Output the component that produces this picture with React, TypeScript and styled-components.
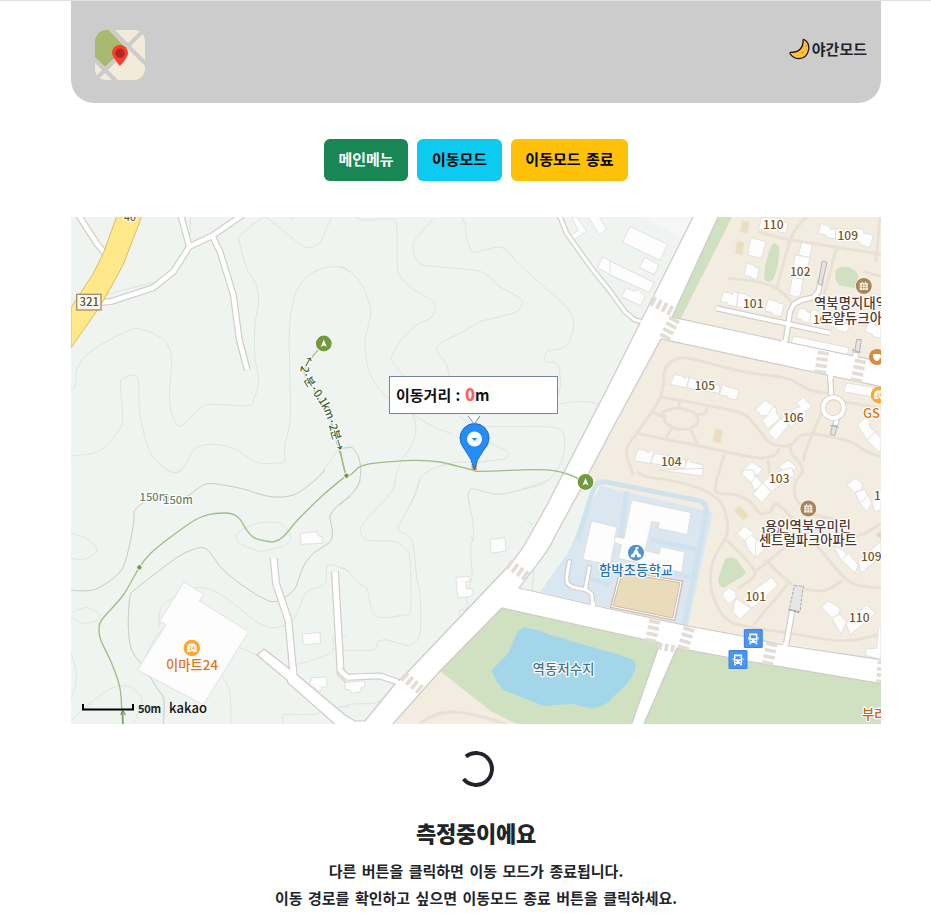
import React from "react";
import styled, { createGlobalStyle } from "styled-components";

const GlobalStyle = createGlobalStyle`
  * { box-sizing: border-box; }
  html, body { margin: 0; padding: 0; overflow: hidden; }
  body {
    background: #fff;
    color: #212529;
    font-family: "Noto Sans CJK KR", "Noto Sans", sans-serif;
    font-size: 15px;
    font-weight: 700;
    word-spacing: 2.1px;
  }
`;

const Page = styled.div`
  height: 921px;
  border-top: 1px solid #dee0e2;
  display: flex;
  flex-direction: column;
  align-items: center;
  padding-left: 21px;
`;

const Header = styled.header`
  width: 810px;
  height: 102px;
  flex: none;
  padding: 4px 14px 0 24px;
  background: #ccc;
  border-radius: 0 0 23px 23px;
  display: flex;
  align-items: center;
  justify-content: space-between;
`;

const Logo = styled.svg`
  width: 50px;
  height: 50px;
  margin-top: 1px;
`;

const NightToggle = styled.div`
  display: flex;
  align-items: center;
  gap: 2px;
  line-height: 22px;
  margin-bottom: 10px;
  svg { width: 21px; height: 22px; }
`;

const Toolbar = styled.nav`
  display: flex;
  gap: 9px;
  margin: 36px 0;
`;

const ModeButton = styled.button<{ $bg: string; $fg: string; $w: number }>`
  width: ${(p) => p.$w}px;
  height: 42px;
  padding: 0 0 4px;
  border: 0;
  border-radius: 6px;
  background: ${(p) => p.$bg};
  color: ${(p) => p.$fg};
  font: inherit;
  word-spacing: inherit;
`;

const MapFrame = styled.div`
  width: 810px;
  height: 507px;
  flex: none;
  position: relative;
  overflow: hidden;
  word-spacing: 0;
`;

const MapCanvas = styled.svg`
  display: block;
  width: 810px;
  height: 507px;
`;

const DistanceBubble = styled.div`
  position: absolute;
  left: 318px;
  top: 159px;
  width: 169px;
  height: 38px;
  border: 1px solid #7782a8;
  background: #fff;
  color: #111;
  padding: 0 6px;
  line-height: 34px;
  word-spacing: 1px;
`;

const Distance = styled.span`
  color: #ff6060;
  font-size: 16.5px;
  font-weight: 900;
`;

const Status = styled.section`
  display: flex;
  flex-direction: column;
  align-items: center;
  padding-top: 27px;
  p { margin: 0; line-height: 27px; white-space: nowrap; }
`;

const Spinner = styled.div`
  width: 36px;
  height: 36px;
  border: 4px solid #212529;
  border-left-color: transparent;
  border-radius: 50%;
  transform: rotate(6deg);
`;

const Title = styled.h2`
  margin: 29px 0 8px;
  font-size: 22px;
  font-weight: 900;
  line-height: 33px;
  letter-spacing: -0.2px;
`;

type Pt = [number, number];

const parse = (s: string): Pt[] =>
  s.split(" ").map((q) => q.split(",").map(Number) as Pt);

/* Catmull-Rom spline through a list of points. */
const smooth = (s: string) => {
  const p = parse(s);
  let d = `M${p[0]}`;
  for (let i = 0; i < p.length - 1; i++) {
    const a = p[Math.max(0, i - 1)], b = p[i], c = p[i + 1], e = p[Math.min(p.length - 1, i + 2)];
    d += ` C${b[0] + (c[0] - a[0]) / 7},${b[1] + (c[1] - a[1]) / 7} ${c[0] - (e[0] - b[0]) / 7},${c[1] - (e[1] - b[1]) / 7} ${c[0]},${c[1]}`;
  }
  return d;
};

/* Map sectors are surveyed on a grid three times finer than the canvas. */
const SECTORS = {
  nw: [70, 215], n: [340, 215], ne: [610, 215],
  sw: [70, 470], s: [340, 480], se: [610, 470],
} as const;
type SectorName = keyof typeof SECTORS;

const Sector = ({ at, children }: { at: SectorName; children: React.ReactNode }) => (
  <g transform={`translate(${SECTORS[at].join(" ")}) scale(0.333333)`}>{children}</g>
);

const Lines = ({ paths, color, width }: { paths: string[]; color: string; width: number }) => (
  <g fill="none" stroke={color} strokeWidth={width} strokeLinejoin="round">
    {paths.map((p) => <path key={p} d={smooth(p)} />)}
  </g>
);

const Road = ({ paths, width = 15, cap = "butt" }: { paths: string[]; width?: number; cap?: "butt" | "round" | "square" }) => (
  <g fill="none" strokeLinejoin="round" strokeLinecap={cap}>
    {paths.map((p) => <polyline key={p} points={p} stroke="#d0cdca" strokeWidth={width + 7} />)}
    {paths.map((p) => <polyline key={p} points={p} stroke="#fff" strokeWidth={width} />)}
  </g>
);

const Blocks = ({ shapes }: { shapes: string[] }) => (
  <g fill="#fdfdfd" stroke="#dfdcd8" strokeWidth={2.5}>
    {shapes.map((p) => <polygon key={p} points={p} />)}
  </g>
);

const Crossing = ({ d, w }: { d: string; w: number }) => (
  <path d={d} fill="none" stroke="#e2ddd6" strokeWidth={w} strokeDasharray="11 8" />
);

const CONTOURS: Record<SectorName, string[]> = {
  nw: [
    "0,530 12,520 18,500 20,465 45,425 100,385 185,343 225,346 275,370 298,400 305,440 298,545 305,595 318,625 332,634 350,620 380,588 415,568 535,572 552,550 566,500 554,420 555,330 566,255 555,200 530,160 508,80 512,60 575,10 600,15 690,88 722,97 750,82 770,40 785,5",
    "0,723 70,715 110,690 150,640 158,620 155,560 152,500 165,487 190,481 205,495 210,600 235,700 262,740 300,768 322,772 345,750 375,700 425,688 490,700 560,742 625,744 643,738 645,690 661,600 658,350 675,240 710,185 760,160 810,155 840,170",
    "100,250 130,233 260,200", "358,90 362,5", "655,0 665,12 680,5", "0,262 20,240", "750,780 800,710 815,698 840,700",
  ],
  n: [
    "40,5 75,15 155,12 170,35 172,150 180,182 215,220 280,260 284,290 270,310 230,330 180,380 155,425 160,445 200,500 215,580 228,640 215,690 180,745 165,800",
    "280,10 225,75 220,110 235,140 260,152 400,165 440,180 480,215 540,250 546,270 530,290 480,305 415,322 370,350 300,385 292,410 320,450 330,500",
    "365,5 375,30 380,70 395,108 415,110 470,97 500,105 530,140 600,205 670,265 697,305 700,340 688,380 665,400 620,410 616,440 645,442 658,465 660,520 640,570",
    "0,157 25,165 65,208 92,280 88,320 75,375 82,450 105,505 145,550 190,580 220,600 290,640 340,657",
    "650,570 685,562 740,560 780,568", "330,570 360,605 400,628 450,634 630,636 665,648 674,675 668,730 640,780 600,805 480,838 400,822 385,835 390,870",
    "440,680 500,708 505,720 490,732 400,742 340,742 270,765 240,790 230,830 210,870",
    "0,703 35,697 55,725 62,760 58,800 40,830 0,870",
  ],
  ne: [],
  sw: [
    "0,361 70,360 130,325 160,290 180,220 192,150 195,120 245,85 330,90 400,45 440,42 520,57 600,80 670,75 730,35 765,0",
    "280,765 282,690 265,660 220,590 185,540 175,470 180,380 200,355 310,270 370,238 410,238 460,300 530,355 600,394 640,385 675,355 700,290 730,250 780,215 787,180 780,140 800,110 840,80",
    "0,190 45,203 82,238 45,268 0,265", "10,425 50,413 85,430 85,450 40,460 0,440",
    "0,545 18,600 16,650 0,690", "290,0 315,8 335,0",
    "570,245 510,220 502,190 560,160 630,160 663,200 640,228 570,245",
    "268,470 275,410 350,360 410,355 470,385 560,455 610,473 670,450 700,380 720,360 765,340 775,285 840,305",
    "0,755 70,692 130,652 180,650 212,680 215,710 190,762", "420,525 480,522 560,555 640,590 780,550 790,500 830,500",
    "455,615 480,670 482,765", "640,762 638,740 650,733 740,733 760,715 840,710", "225,560 280,480 330,580 390,690",
  ],
  s: [
    "165,0 155,35 70,130 62,155 80,180 165,185 200,210 210,240 212,390 190,405 120,412 95,385 80,325 55,310 20,270 0,262",
    "240,0 210,75 175,145 215,180 230,290 241,350 240,460 215,495 195,495 140,480 115,485 100,510 10,512",
    "390,165 400,180 398,120 385,60 390,30 410,28 480,43 600,15 625,0", "400,175 392,210 396,290 380,340 382,385 360,390 358,410",
    "0,70 45,35 62,0", "560,122 580,135", "582,270 576,330", "0,682 40,672 100,670 130,655 165,615",
  ],
  se: [],
};

const PATHS_NE = [
  "70,780 50,720 55,690 80,655 150,550 165,465 185,440 215,428 260,435 400,470 530,490 600,525 655,535",
  "150,545 380,590 430,625 475,680 510,692 545,690 570,662 620,658 720,680 770,710 813,725",
  "80,655 300,700 440,728 490,722 510,700", "540,685 545,715 570,745 580,775",
  "165,608 160,590 205,580 250,592 265,620 240,640 200,642 165,620 165,600",
  "210,555 205,580", "292,575 285,595 255,600", "125,590 165,607", "185,640 168,668", "240,640 262,685",
  "342,718 325,780", "475,735 478,780", "640,580 590,700 580,740", "355,190 440,200 500,220 545,260", "445,50 530,72 813,118",
  "590,5 545,65 500,220", "680,95 640,250", "810,5 798,140", "760,170 813,185", "700,560 813,580",
];
const PATHS_SE = [
  "80,5 110,20 200,35 280,60 330,95 350,145 350,195 310,270 302,340 320,405 350,448 400,468 540,490 680,512 760,505 813,490",
  "325,10 318,65 380,75 420,95 450,130 480,125 505,105 600,200 640,250 700,320 740,345 813,355",
  "350,210 435,305 385,355", "435,305 480,270 540,220", "465,268 550,345 640,362 700,330", "535,340 430,465",
  "580,5 555,40 560,90 620,135 720,155", "730,200 765,190 813,160",
];

const BLOCKS: Record<SectorName, string[]> = {
  nw: [],
  n: ["708,5 740,48 700,75 692,60 715,47 696,8", "745,5 775,0 800,43 778,60", "788,126 845,155 840,195 773,158"],
  ne: [
    "60,35 173,88 150,136 38,82", "106,127 147,150 133,180 88,157", "0,138 133,203 118,232 0,180", "48,218 75,228 85,223 105,245 92,272 35,245",
    "455,8 478,8 490,14 505,8 512,18 535,25 528,55 505,50 502,43 475,42 470,47 445,43",
    "423,68 467,80 455,130 413,120", "410,145 432,150 434,156 448,160 441,193 425,190 423,185 402,182",
    "632,25 660,35 663,45 678,40 676,72 652,68 648,60 625,55", "678,40 698,43 700,55 715,53 708,82 676,72", "735,40 762,43 760,54 790,60 780,97 752,90 750,82 725,75",
    "575,82 606,88 600,128 565,121", "555,120 600,128 590,168 582,166 580,193 546,188", "546,188 580,193 574,212 576,220 568,247 537,240 543,210",
    "340,230 362,235 366,240 368,230 385,233 380,275 355,270 350,262 332,260", "385,233 408,238 440,262 438,283 380,275", "475,253 505,260 507,265 523,268 513,305 488,300 487,293 464,288",
    "568,279 590,283 590,290 605,294 598,324 576,320 574,313 558,310", "605,282 628,290 622,329 598,324", "640,305 720,330 710,353 682,345 678,338 635,325", "775,320 795,325 797,333 813,330 813,370 790,365 788,358 765,350",
    "550,363 717,398 710,425 542,390", "710,504 813,520 813,550 700,530",
    "195,478 222,485 224,491 238,481 230,519 180,508", "238,488 270,496 330,512 328,535 230,519", "340,505 345,513 388,525 380,555 355,550 352,543 328,540",
    "465,556 498,577 488,593 475,602 455,602 437,583", "488,577 498,577 500,595 511,610 474,640 455,618 475,598", "511,610 538,628 498,677 475,652", "580,546 605,575 585,590 590,600 545,635 511,612 557,580 570,575 560,565",
    "84,702 110,708 112,712 133,705 122,745 72,738", "133,715 165,720 228,735 225,760 122,745", "234,730 240,740 280,750 272,778 250,775 248,770 222,763",
    "425,740 458,762 445,780 395,770", "535,735 560,758 535,780 505,755",
    "765,608 780,618 778,635 795,650 772,676 743,630", "795,650 813,670 813,712 800,705 772,676",
  ],
  sw: [
    "342,336 402,373 388,393 536,485 400,704 202,600 288,465 269,454", "691,190 740,185 745,198 757,200 757,220 693,223",
    "697,492 750,488 752,520 700,524", "725,624 768,621 772,650 755,652 753,663 738,662 737,655 718,645", "825,640 840,637 840,660 827,660",
  ],
  s: [
    "450,178 495,173 498,213 453,220", "348,292 388,289 390,302 377,306 379,326 397,328 400,340 390,350 353,353",
    "15,608 73,603 75,620 63,623 64,635 35,640 32,630 15,628", "755,123 830,142 826,170 840,174 840,192 823,190 810,255 728,238",
  ],
  se: [
    "145,0 280,-5 277,18", "65,90 243,128 232,194 145,175 148,158 125,155 105,242 148,252 153,230 224,246 215,307 135,290 25,265 35,225 14,217 14,200 42,205",
    "405,0 430,0 438,30 424,38 395,10", "424,38 438,18 458,42 432,62", "458,38 484,65 455,98 430,72", "458,38 490,10 545,-8 553,15 484,65",
    "404,168 425,185 432,190 425,210 403,212 382,190", "425,195 450,220 437,263 413,235 405,210", "437,220 465,180 500,160 512,190 437,263",
    "735,25 757,40 756,58 735,68 710,45", "735,68 763,58 775,80 750,100", "775,75 785,100 770,125 750,100", "785,95 813,80 813,120 795,125",
    "670,228 700,240 715,262 695,275", "695,270 715,250 745,285 735,310 705,280", "745,270 813,215 813,260 752,310",
    "355,352 378,367 378,385 355,402 335,375", "378,385 425,415 390,448 368,425 372,405", "398,387 425,415 452,395 430,365", "485,322 503,345 452,395 425,365 460,340",
    "655,393 690,415 688,433 665,445 635,410", "688,433 710,456 693,492 665,445", "770,405 797,430 720,495 708,460",
    "805,475 813,470 813,570 765,555 770,535 800,535",
  ],
};

const HALO = { stroke: "#fff", strokeWidth: 2.4, strokeLinejoin: "round" as const, paintOrder: "stroke" as const };

const MapLabel = ({ x, y, w, children, color = "#74551f", size = 12, weight = 500 }: {
  x: number; y: number; w?: number; children: string; color?: string; size?: number; weight?: number;
}) => (
  <text x={x} y={y} fill={color} fontSize={size} fontWeight={weight} textLength={w} {...HALO}>{children}</text>
);

const TrailPin = ({ x, y }: { x: number; y: number }) => (
  <g transform={`translate(${x} ${y})`}>
    <circle r="8.5" fill="#fff" /><circle r="7.9" fill="#719a3e" />
    <path d="M0-4 3 3.5 0 1.8-3 3.5Z" fill="#fff" />
  </g>
);

const BusStop = ({ x, y }: { x: number; y: number }) => (
  <g transform={`translate(${x} ${y})`}>
    <rect x="-9.5" y="-9.5" width="19" height="19" rx="1.5" fill="#3f83e2" />
    <rect x="-8.5" y="-8.5" width="17" height="17" rx="1" fill="#4c94f2" />
    <path d="M-4-5H4V4.500H-4ZM-2.600-3.300V-.2H2.600V-3.300ZM-3 1.300V2.600H-1.400V1.300ZM1.400 1.300V2.600H3V1.300ZM-4 4H-2V5.700H-4ZM2 4H4V5.700H2ZM-5.300-1.500H-4.500V1H-5.300ZM4.500-1.500H5.300V1H4.500Z" fill="#fff" fillRule="evenodd" />
  </g>
);

const AptPin = ({ x, y }: { x: number; y: number }) => (
  <g transform={`translate(${x} ${y})`}>
    <circle r="8.6" fill="#fff" /><circle r="8" fill="#a98653" />
    <path d="M-4-3h1.7v-1.2h1.2V-3h2.2v-1.2h1.2V-3H4V4H-4Z" fill="#fff" />
    <path d="M-4-.8H4M-4 1.4H4M-1.3-3V4M1.3-3V4" stroke="#a98653" strokeWidth=".6" />
  </g>
);

const StorePin = ({ x, y }: { x: number; y: number }) => (
  <g transform={`translate(${x} ${y})`}>
    <circle r="8.3" fill="#fea733" />
    <path d="M-2.5-4.500H2.5L4.8-1.500V4H1V2.500H-1V4H-4.8V-1.500Z" fill="#fff" />
    <text x="-2.800" y="1.700" fontSize="5" fontWeight="700" fill="#fea733">24</text>
  </g>
);

const sectors = Object.keys(SECTORS) as SectorName[];

const CityMap = () => (
  <MapCanvas viewBox="71 217 810 507">
    <rect x="71" y="217" width="810" height="507" fill="#eff4f1" />
    <polygon points="643,217 693,217 682,238" fill="#f6f6f6" />
    {sectors.map((s) => <Sector key={s} at={s}><Lines paths={CONTOURS[s]} color="#dbe0db" width={2.5} /></Sector>)}
    <Sector at="sw"><Lines paths={CONTOURS.sw.slice(0, 2)} color="#c6cbc4" width={2.5} /></Sector>
    <Sector at="n"><Lines paths={CONTOURS.n.slice(7)} color="#c6cbc4" width={2.5} /></Sector>

    {/* land use */}
    <polygon points="718,217 881,217 881,362 787,342 672,317" fill="#f3ece1" />
    <polygon points="661,339 881,386 881,660 688,626 713,512 600,486 591,483 572,505 610,433" fill="#f3ece1" />
    <polygon points="440,671 520,724 393,724" fill="#f3ece1" />
    <polygon points="718,217 732,217 680,320 672,317" fill="#d0e1c1" />
    <polygon points="502,608 881,683 881,724 517,724 492,712 440,671" fill="#d0e1c1" />
    <polygon points="600,486 713,512 688,626 540,592 567,554" fill="#dae7f0" />
    <Sector at="ne"><Lines paths={PATHS_NE} color="#e9e1d5" width={9} /></Sector>
    <Sector at="se">
      <Lines paths={PATHS_SE} color="#e9e1d5" width={9} />
      <g fill="none" stroke="#cfe2ee" strokeWidth={15}>
        <path d="M-98 210-52 65Q-40 28-5 37L265 92Q295 98 288 135L222 465M50 65 30 220M120 208 265 240M180 310 240 322M0 270V330" />
      </g>
      <path d="M-60 325 0 345" stroke="#cfe2ee" strokeWidth="12" />
      <path d="M345 267Q370 255 382 270L408 308 400 318 340 353Q322 350 325 325Z" fill="#d0e1c1" />
      <path d="M813 182 797 195 813 208Z" fill="#d0e1c1" />
      <g fill="#e9dfc0" stroke="#f2ead4" strokeWidth="4"><path d="M390 105 418 138 400 152 370 122Z" /></g>
      <path d="M30 302 218 333 194 451 2 412Z" fill="#fff" stroke="#d3b9aa" strokeWidth="4" />
      <path d="M36 309 210 338 188 444 9 407Z" fill="#e8dcba" stroke="#d3b9aa" strokeWidth="3" />
    </Sector>
    <Sector at="ne">
      <path d="M485 90Q500 78 508 100Q507 160 488 195Q475 208 462 190Q463 140 485 90ZM677 165Q695 150 720 158Q745 170 745 185L737 220 695 212Q672 208 677 165Z" fill="#d0e1c1" />
      <g fill="#e9dfc0" stroke="#f2ead4" strokeWidth="4"><path d="M397 15 420 20 412 58 388 50ZM380 75 405 82 398 122 373 115ZM314 640 340 645 333 687 306 680Z" /></g>
    </Sector>
    <Sector at="s">
      <path d="M455 570 505 520Q520 485 530 460Q542 440 560 443L600 452 635 466 840 525 880 540Q890 545 885 570Q868 612 838 634Q825 645 806 667Q775 686 750 685Q725 680 700 672L640 675Q625 682 605 676L490 630Q475 615 465 595Z" fill="#a4d6ea" />
      <path d="M240 732Q290 690 350 697Q400 700 500 732" fill="none" stroke="#e9e1d5" strokeWidth="10" />
    </Sector>

    {sectors.map((s) => <Sector key={s} at={s}><Blocks shapes={BLOCKS[s]} /></Sector>)}

    {/* secondary roads */}
    <Sector at="s"><Road paths={["688,245 680,290 682,310 695,320 740,330 755,342 760,385", "748,262 736,328"]} width={9} cap="round" /></Sector>
    <Sector at="nw">
      <Road paths={["22,-5 80,85 110,122", "332,0 358,95", "85,263 125,259 250,218 310,170 358,95 428,62 520,-2", "428,65 450,110 490,240 508,375 532,465"]} width={14} />
      <path d="M140 5 100 115 70 175 3 278V398L85 282 120 222 160 148 215 5Z" fill="#ffe88a" stroke="#d5bf63" strokeWidth="3" />
      <rect x="20" y="238" width="73" height="47" fill="#fff6cc" stroke="#a58e78" strokeWidth="4" />
    </Sector>
    <Sector at="n"><Road paths={["658,0 680,55 755,160 810,228 855,290 885,315 915,322"]} width={10} /></Sector>
    <Sector at="ne">
      <Road paths={["320,280 660,354", "524,395 532,345 540,290 552,268 575,255 610,247 625,230 632,195", "660,475 664,540 662,550", "682,610 672,640", "738,400 735,440"]} width={12} />
      <circle cx="670" cy="578" r="31" fill="#f3ece1" stroke="#d0cdca" strokeWidth="17" /><circle cx="670" cy="578" r="31" fill="none" stroke="#fff" strokeWidth="12" />
      <g fill="#e3e3e3" stroke="#b5b5b5" strokeWidth="3"><path d="M637 138 651 142 635 212 624 206ZM740 373 754 374 748 412 734 412ZM668 630 682 632 674 662 661 658ZM660 631 686 637M726 405 752 412" /></g>
    </Sector>
    <Sector at="sw"><Road paths={["611,264 618,340 655,450 672,630", "795,304 812,608 835,630"]} width={17} /></Sector>
    <Sector at="s"><Road paths={["0,570 22,592 60,590 120,588 185,610"]} width={14} /></Sector>
    <Sector at="se"><Road paths={["548,415 526,535"]} width={13} /></Sector>

    {/* arterial roads */}
    <path d="M694 215 641 321 610 383 547 505 529 537Q520 555 499 576L402 678 395 684 382 700 365 721 355 721 345 715 295 673 264 649 257 655 287 680 288 683 337 726H391L440 671 502 608 610 632 660 643 631 726H643L677 648 753 662 883 684V660L783 645 737 635 688 626 610 609 519 588 536 566Q551 546 553 540L580 490 610 433 661 339 827 375 883 387V362L787 342 672 317 719 215Z" fill="#fff" stroke="#cdcac7" strokeWidth="1.2" />
    <g fill="none" stroke="#fff" strokeWidth="4.5">
      <path d="M640.500 322.300 645 322.500M784.500 340 784 344M830.500 373V379M855.500 354V360" />
      <path d="M785.700 643 784.700 648M396 682 402 684.500M592.800 602V608" />
      <path d="M293 667 293.500 676" strokeWidth="5.7" />
    </g>
    <Sector at="ne">
      <Crossing d="M125 257 192 292" w={30} /><Crossing d="M195 310 160 377" w={34} />
      <Crossing d="M640 409 630 475" w={34} /><Crossing d="M752 434 738 500" w={34} />
    </Sector>
    <Sector at="s"><Crossing d="M505 250 565 293" w={30} /><Crossing d="M190 587 242 630" w={30} /></Sector>
    <Sector at="se">
      <Crossing d="M135 450 120 522" w={34} /><Crossing d="M238 473 218 540" w={34} /><Crossing d="M486 518 472 584" w={34} />
      <Crossing d="M145 528 200 538" w={22} /><Crossing d="M813 572 808 638" w={20} />
      <path d="M553 347 580 348 570 425 538 418Z" fill="#e6e6e6" stroke="#aaa" strokeWidth="3" strokeDasharray="9 4" />
      <path d="M535 418 567 428" stroke="#999" strokeWidth="3" />
    </Sector>

    {/* hiking trail */}
    <Sector at="n"><Lines paths={["735,800 690,780 640,767 580,764 420,769 400,766 300,741 220,736 100,745 60,755 20,782 0,700"]} color="#9ebe86" width={4} /></Sector>
    <Sector at="sw"><Lines paths={["829,17 765,70 685,148 640,200 612,215 580,212 550,202 530,180 510,148 490,133 460,129 415,134 375,150 290,210 240,252 208,292 160,375 95,450 87,480 93,512 125,580 150,655 158,762"]} color="#9ebe86" width={4} /></Sector>
    <Sector at="nw">
      <Lines paths={["762,385 722,432 703,475 745,545 780,610 795,665 808,705 828,780"]} color="#9ebe86" width={4} />
      <path id="trail" d="M722 425Q700 455 703 474Q718 504 738 530Q776 580 783 615L814 718" fill="none" />
      <text fontSize="34" fill="#43642f" fontWeight="500" stroke="#fff" strokeWidth="6" paintOrder="stroke" dy="11">
        <textPath href="#trail" textLength="312">←2·분·0.1km·2분→</textPath>
      </text>
    </Sector>
    {[[346.5, 475.7], [139.4, 567.4]].map(([x, y]) => <circle key={x} cx={x} cy={y} r="2.7" fill="#719a3e" stroke="#fff" />)}
    <path d="M120.5 715 123 711 125.5 715M123 711V724" fill="none" stroke="#5e8352" />
    <TrailPin x={323.8} y={343.5} />
    <TrailPin x={585.5} y={482} />

    <MapLabel x={79.500} y={306} size={11.5} color="#5d4d38">321</MapLabel>
    <MapLabel x={124} y={220.5} size={10.5}>40</MapLabel>
    <MapLabel x={139.5} y={501} size={11.2} color="#6d8469">150m</MapLabel>
    <MapLabel x={163} y={504} size={11.2} color="#6d8469">150m</MapLabel>
    <MapLabel x={763} y={229}>110</MapLabel>
    <MapLabel x={837.5} y={239.5}>109</MapLabel>
    <MapLabel x={790} y={276}>102</MapLabel>
    <MapLabel x={743} y={307.5}>101</MapLabel>
    <MapLabel x={813} y={324}>103</MapLabel>
    <MapLabel x={694.5} y={390}>105</MapLabel>
    <MapLabel x={783} y={421.5}>106</MapLabel>
    <MapLabel x={661} y={466}>104</MapLabel>
    <MapLabel x={769} y={482.5}>103</MapLabel>
    <MapLabel x={874} y={500}>107</MapLabel>
    <MapLabel x={760} y={536}>102</MapLabel>
    <MapLabel x={861} y={561}>109</MapLabel>
    <MapLabel x={745.5} y={600.5}>101</MapLabel>
    <MapLabel x={849} y={622}>110</MapLabel>

    <AptPin x={863.8} y={286} />
    <AptPin x={808.3} y={508.5} />
    <MapLabel x={814} y={308} w={74} size={13.3} color="#51382f">역북명지대역</MapLabel>
    <MapLabel x={820.5} y={322.5} w={86} size={13.3} color="#51382f">로얄듀크아파트</MapLabel>
    <MapLabel x={765} y={530.5} w={86} size={13.3} color="#51382f">용인역북우미린</MapLabel>
    <MapLabel x={759} y={545} w={98} size={13.3} color="#51382f">센트럴파크아파트</MapLabel>
    <g transform="translate(636 552.7)">
      <circle r="8.6" fill="#fff" /><circle r="8" fill="#4d92d3" />
      <path d="M-.5-5.500H2.500V-3.800H.5L2.500-.8V.5L5 2V4.500H1V2H-1V4.500H-5V2L-2.500.5V-.8L-.5-3.300Z" fill="#fff" />
    </g>
    <MapLabel x={599} y={575} w={74} size={13.3} color="#2270b5">함박초등학교</MapLabel>
    <MapLabel x={532.5} y={674} w={62} size={13.3} color="#41758e">역동저수지</MapLabel>
    <StorePin x={191.8} y={648} />
    <MapLabel x={166} y={669.5} w={52} size={13.3} color="#e07516">이마트24</MapLabel>
    <g transform="translate(877 357)"><circle r="8" fill="#d98a3b" /><path d="M-4-3H3V1Q2 4-.5 4-4 3-4-3M3-2H5V1H3" fill="#fff" /></g>
    <StorePin x={879} y={395} />
    <MapLabel x={863} y={417.5} size={13} color="#e07516">GS25</MapLabel>
    <MapLabel x={862} y={719} size={13.3} color="#cc5e12">부라</MapLabel>
    <BusStop x={753.3} y={638.5} />
    <BusStop x={738} y={659.5} />

    {/* current position */}
    <path d="M471.500 470V464H477V470Z" fill="#e9a63d" />
    <path d="M474.500 470Q472 459 465 450Q460 444 460 438A14.500 14.500 0 0 1 489 438Q489 445 483 451Q476 460 474.500 470Z" fill="#268cf8" stroke="#176dcc" />
    <circle cx="474.500" cy="439" r="7.500" fill="#fff" />
    <path d="M471.500 438H477.500L474.500 441Z" fill="#268cf8" />
    <path d="M468 416 474.300 424 480 416" fill="#fff" stroke="#7782a8" />

    {/* scale bar */}
    <path d="M83 704V709.500H133V704" fill="none" stroke="#000" strokeWidth="2" />
    <text x="138" y="713" fontSize="11" fontWeight="700" fill="#222" textLength="23">50m</text>
    <text x="169" y="713" fontSize="13" fontWeight="500" fill="#111" textLength="38">kakao</text>
  </MapCanvas>
);

export default function App() {
  return (
    <>
      <GlobalStyle />
      <Page>
        <Header>
          <Logo viewBox="0 0 50 50">
            <defs><clipPath id="tile"><rect width="50" height="50" rx="11" /></clipPath></defs>
            <g clipPath="url(#tile)">
              <rect width="50" height="50" fill="#f2ebda" />
              <path d="M0 0H14L31 18 10 37 0 28Z" fill="#a9ba70" />
              <path d="M15-2 54 37M51-2 33 16M-3 27 24 54M0 50 20 30" fill="none" stroke="#ccc" strokeWidth="4.200" />
            </g>
            <path d="M25 36Q17 27 17 23A8 8 0 0 1 33 23Q33 27 25 36Z" fill="#fc3d2c" />
            <circle cx="25" cy="23.300" r="4.700" fill="#b4271e" />
          </Logo>
          <NightToggle>
            <svg viewBox="0 0 21 22">
              <path d="M15 1.500Q20.500 4.500 19.700 11.500Q18 20.500 9.500 20.700Q4 20.500 1 15.500Q.8 14 2.500 14.300Q8.500 14.500 11.800 10.500Q14.500 7 14 2.500Q14 1.200 15 1.500Z" fill="#ffc33a" stroke="#1b1714" strokeWidth="1.300" strokeLinejoin="round" />
              <g fill="#eaa018"><circle cx="17" cy="8" r="1" /><circle cx="13.500" cy="14.500" r="1.200" /><circle cx="8.500" cy="17.500" r=".8" /><circle cx="17" cy="12" r=".7" /></g>
            </svg>
            <span>야간모드</span>
          </NightToggle>
        </Header>
        <Toolbar>
          <ModeButton $bg="#198754" $fg="#fff" $w={84}>메인메뉴</ModeButton>
          <ModeButton $bg="#0dcaf0" $fg="#000" $w={85}>이동모드</ModeButton>
          <ModeButton $bg="#ffc107" $fg="#000" $w={117}>이동모드 종료</ModeButton>
        </Toolbar>
        <MapFrame>
          <CityMap />
          <DistanceBubble>이동거리 : <Distance>0</Distance>m</DistanceBubble>
        </MapFrame>
        <Status>
          <Spinner />
          <Title>측정중이에요</Title>
          <p>다른 버튼을 클릭하면 이동 모드가 종료됩니다.</p>
          <p>이동 경로를 확인하고 싶으면 이동모드 종료 버튼을 클릭하세요.</p>
        </Status>
      </Page>
    </>
  );
}
